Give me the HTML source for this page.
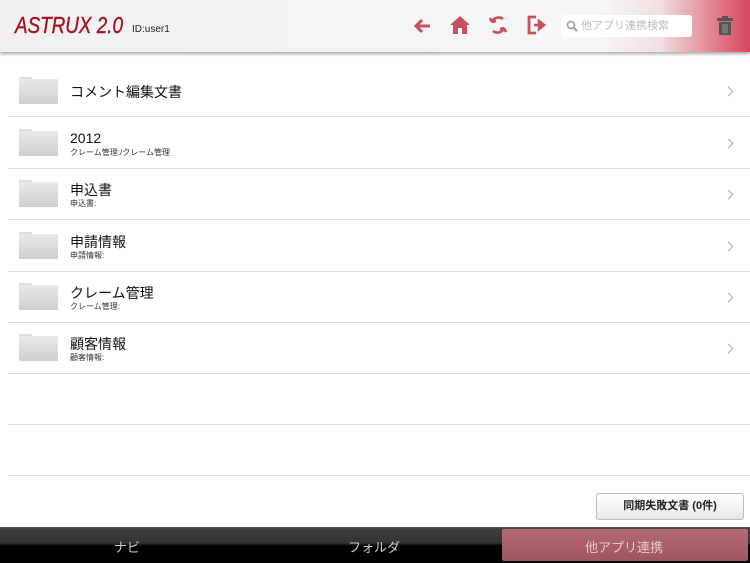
<!DOCTYPE html><html><head><meta charset="utf-8"><style>
body{margin:0;width:750px;height:563px;overflow:hidden;background:#fff;font-family:"Liberation Sans","Noto Sans CJK JP",sans-serif;position:relative}
.hdr{position:absolute;left:0;top:0;width:750px;height:52px;background:linear-gradient(90deg,#f1f1f1 0,#f6f6f6 600px,#f0e0e2 660px,#e27f8c 715px,#d9475d 750px);box-shadow:0 2px 3px rgba(0,0,0,.35)}
.logo{position:absolute;left:15px;top:12px;font-size:23px;font-style:italic;color:#a4151f;transform:scaleX(.82);transform-origin:left;-webkit-text-stroke:.4px #a4151f}
.id{position:absolute;left:132px;top:24px;font-size:10px;color:#222}
.srch{position:absolute;left:561px;top:15px;width:131px;height:22px;background:#fff;border-radius:3px;font-size:11px;color:#bbb;line-height:22px;text-indent:20px}
.row{position:absolute;left:8px;width:742px;border-bottom:1px solid #ddd;height:51px}
.fold{position:absolute;left:11px;top:12px;width:39px;height:27px}
.t1{position:absolute;left:62px;font-size:14px;color:#111}
.t2{position:absolute;left:62px;top:30px;font-size:8px;color:#333}
.chev{position:absolute;right:18px;top:23px;width:6px;height:6px;border-right:1.5px solid #aaa;border-top:1.5px solid #aaa;transform:rotate(45deg)}
.btn{position:absolute;left:596px;top:493px;width:146px;height:25px;border:1px solid #bbb;border-radius:3px;background:linear-gradient(#fff,#e8e8e8);font-size:11px;font-weight:bold;text-align:center;line-height:25px;color:#222}
.tab{position:absolute;left:0;top:527px;width:750px;height:36px;background:linear-gradient(#5a5a5a 0,#3e3e3e 2px,#333 16px,#000 19px,#000)}
.tb{position:absolute;top:537px;font-size:13px;color:#ccc}
.act{position:absolute;left:502px;top:529px;width:246px;height:32px;border-radius:2px;background:linear-gradient(#b36a73,#9e5560)}
</style></head><body>
<div class="hdr">
<div class="logo">ASTRUX 2.0</div><div class="id">ID:user1</div>
<svg style="position:absolute;left:412px;top:16px" width="20" height="20" viewBox="0 0 20 20"><path d="M18 10H4M10 4L4 10L10 16" stroke="#c45060" stroke-width="3" fill="none"/></svg>
<svg style="position:absolute;left:450px;top:15px" width="20" height="20" viewBox="0 0 20 20"><path d="M10 1L0 10h3v9h5v-6h4v6h5v-9h3z" fill="#c45060"/></svg>
<svg style="position:absolute;left:488px;top:15px" width="20" height="20" viewBox="0 0 20 20"><path d="M15 4A7 7 0 0 0 4 7M4 7L2 3M4 7l4-1M5 16a7 7 0 0 0 11-3M16 13l2 4M16 13l-4 1" stroke="#c45060" stroke-width="2.6" fill="none"/></svg>
<svg style="position:absolute;left:526px;top:15px" width="22" height="20" viewBox="0 0 22 20"><path d="M10 2H3v16h7" stroke="#c45060" stroke-width="2.8" fill="none"/><path d="M8 10h8M13 6l5 4-5 4z" stroke="#c45060" stroke-width="2.6" fill="#c45060"/></svg>
<div class="srch">他アプリ連携検索<svg style="position:absolute;left:5px;top:5px" width="12" height="12" viewBox="0 0 12 12"><circle cx="5" cy="5" r="3.5" stroke="#999" stroke-width="1.5" fill="none"/><path d="M7.5 7.5L11 11" stroke="#999" stroke-width="2"/></svg></div>
<svg style="position:absolute;left:716px;top:16px" width="18" height="20" viewBox="0 0 18 20"><rect x="1" y="2" width="16" height="3" fill="#555"/><rect x="6" y="0" width="6" height="3" fill="#555"/><rect x="3" y="6" width="12" height="13" fill="#555"/><path d="M7 8v9M9 8v9M11 8v9" stroke="#999" stroke-width="1"/></svg>
</div>
<div class="row" style="top:65px"><svg class="fold" viewBox="0 0 39 27"><defs><linearGradient id="g" x1="0" y1="0" x2="0" y2="1"><stop offset="0" stop-color="#e9e9e9"/><stop offset="1" stop-color="#cfcfcf"/></linearGradient></defs><rect x="0" y="0" width="13" height="4" fill="#ddd"/><rect x="0" y="2" width="39" height="25" fill="url(#g)"/></svg><div class="t1" style="top:17px">コメント編集文書</div><div class="chev"></div></div>
<div class="row" style="top:117px"><svg class="fold" viewBox="0 0 39 27"><rect x="0" y="0" width="13" height="4" fill="#ddd"/><rect x="0" y="2" width="39" height="25" fill="url(#g)"/></svg><div class="t1" style="top:13px">2012</div><div class="t2">クレーム管理:/クレーム管理</div><div class="chev"></div></div>
<div class="row" style="top:168px"><svg class="fold" viewBox="0 0 39 27"><rect x="0" y="0" width="13" height="4" fill="#ddd"/><rect x="0" y="2" width="39" height="25" fill="url(#g)"/></svg><div class="t1" style="top:12px">申込書</div><div class="t2">申込書:</div><div class="chev"></div></div>
<div class="row" style="top:220px"><svg class="fold" viewBox="0 0 39 27"><rect x="0" y="0" width="13" height="4" fill="#ddd"/><rect x="0" y="2" width="39" height="25" fill="url(#g)"/></svg><div class="t1" style="top:12px">申請情報</div><div class="t2">申請情報:</div><div class="chev"></div></div>
<div class="row" style="top:271px"><svg class="fold" viewBox="0 0 39 27"><rect x="0" y="0" width="13" height="4" fill="#ddd"/><rect x="0" y="2" width="39" height="25" fill="url(#g)"/></svg><div class="t1" style="top:12px">クレーム管理</div><div class="t2">クレーム管理:</div><div class="chev"></div></div>
<div class="row" style="top:322px"><svg class="fold" viewBox="0 0 39 27"><rect x="0" y="0" width="13" height="4" fill="#ddd"/><rect x="0" y="2" width="39" height="25" fill="url(#g)"/></svg><div class="t1" style="top:12px">顧客情報</div><div class="t2">顧客情報:</div><div class="chev"></div></div>
<div class="row" style="top:373px"></div>
<div class="row" style="top:424px"></div>
<div class="btn">同期失敗文書 (0件)</div>
<div class="tab"></div>
<div class="act"></div>
<div class="tb" style="left:114px">ナビ</div>
<div class="tb" style="left:348px">フォルダ</div>
<div class="tb" style="left:585px;color:#e8c8cc">他アプリ連携</div>
</body></html>
